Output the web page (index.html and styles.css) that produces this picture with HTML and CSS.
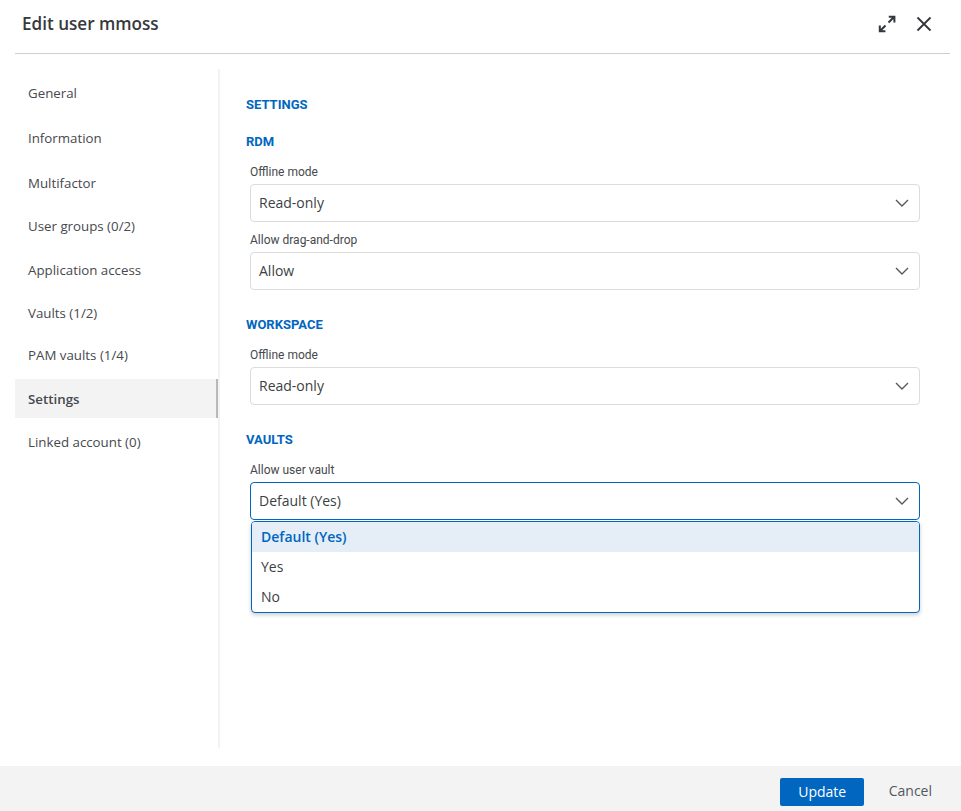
FILE: index.html
```html
<!DOCTYPE html>
<html lang="en">
<head>
    <meta charset="UTF-8">
    <meta name="viewport" content="width=device-width, initial-scale=1.0">
    <title>Edit user mmoss</title>
    <link rel="stylesheet" href="styles.css">
</head>
<body>
    <div class="dialog">
        <header class="dialog-header">
            <h1 class="dialog-title">Edit user mmoss</h1>
            <div class="dialog-actions">
                <svg class="icon-expand" width="18" height="18" viewBox="0 0 18 18" aria-hidden="true">
                    <path d="M10.5 7.5 15.5 2.5M10.8 1.8H16.4V7.4M7.5 10.5 2.5 15.5M1.8 10.6V16.2H7.4" fill="none" stroke="#33363a" stroke-width="2"/>
                </svg>
                <svg class="icon-close" width="16" height="16" viewBox="0 0 16 16" aria-hidden="true">
                    <path d="M1.5 1.5 14.5 14.5M14.5 1.5 1.5 14.5" fill="none" stroke="#33363a" stroke-width="1.8"/>
                </svg>
            </div>
        </header>

        <div class="dialog-body">
            <nav class="sidebar">
                <div class="nav-item">General</div>
                <div class="nav-item">Information</div>
                <div class="nav-item">Multifactor</div>
                <div class="nav-item">User groups (0/2)</div>
                <div class="nav-item">Application access</div>
                <div class="nav-item">Vaults (1/2)</div>
                <div class="nav-item">PAM vaults (1/4)</div>
                <div class="nav-item active">Settings</div>
                <div class="nav-item">Linked account (0)</div>
            </nav>

            <main class="content">
                <h2 class="section-title first">SETTINGS</h2>

                <h2 class="section-title rdm">RDM</h2>
                <label class="field-label">Offline mode</label>
                <div class="select">
                    <span>Read-only</span>
                    <svg class="chevron" width="14" height="8" viewBox="0 0 14 8" aria-hidden="true"><path d="M1 1 7 7 13 1" fill="none" stroke="#55585c" stroke-width="1.4"/></svg>
                </div>
                <label class="field-label second">Allow drag-and-drop</label>
                <div class="select">
                    <span>Allow</span>
                    <svg class="chevron" width="14" height="8" viewBox="0 0 14 8" aria-hidden="true"><path d="M1 1 7 7 13 1" fill="none" stroke="#55585c" stroke-width="1.4"/></svg>
                </div>

                <h2 class="section-title">WORKSPACE</h2>
                <label class="field-label">Offline mode</label>
                <div class="select">
                    <span>Read-only</span>
                    <svg class="chevron" width="14" height="8" viewBox="0 0 14 8" aria-hidden="true"><path d="M1 1 7 7 13 1" fill="none" stroke="#55585c" stroke-width="1.4"/></svg>
                </div>

                <h2 class="section-title">VAULTS</h2>
                <label class="field-label">Allow user vault</label>
                <div class="select-wrap">
                    <div class="select focused">
                        <span>Default (Yes)</span>
                        <svg class="chevron" width="14" height="8" viewBox="0 0 14 8" aria-hidden="true"><path d="M1 1 7 7 13 1" fill="none" stroke="#55585c" stroke-width="1.4"/></svg>
                    </div>
                    <ul class="dropdown">
                        <li class="selected">Default (Yes)</li>
                        <li>Yes</li>
                        <li>No</li>
                    </ul>
                </div>
            </main>
        </div>

        <footer class="dialog-footer">
            <button class="btn-update">Update</button>
            <button class="btn-cancel">Cancel</button>
        </footer>
    </div>
</body>
</html>
```

FILE: styles.css
```css
* {
    box-sizing: border-box;
}

html, body {
    height: 100%;
}

body {
    margin: 0;
    background: #fff;
    color: #3c3f43;
    font-family: 'Open Sans', sans-serif;
    overflow: hidden;
}

.dialog {
    display: flex;
    flex-direction: column;
    height: 811px;
}

.dialog-header {
    display: flex;
    justify-content: space-between;
    align-items: center;
    height: 54px;
    margin: 0 11px 0 15px;
    padding: 0 18px 6px 7px;
    border-bottom: 1px solid #cfcfcf;
}

.dialog-title {
    margin: 0;
    font-size: 17.1px;
    font-weight: 600;
    color: #36393d;
}

.dialog-actions {
    display: flex;
    align-items: center;
    gap: 20px;
}

.dialog-body {
    display: flex;
    flex: 1;
    padding: 15px 41px 18px 15px;
}

.sidebar {
    width: 205px;
    padding-top: 4px;
    border-right: 2px solid #f3f3f3;
}

.nav-item {
    display: flex;
    align-items: center;
    height: 39px;
    padding-left: 13px;
    margin-bottom: 6px;
    font-size: 13.3px;
    color: #46494d;
}

.nav-item:nth-child(3) { margin-bottom: 4px; }
.nav-item:nth-child(4) { margin-bottom: 5px; }
.nav-item:nth-child(5) { margin-bottom: 4px; }
.nav-item:nth-child(6) { margin-bottom: 3px; }
.nav-item:nth-child(7) { margin-bottom: 5px; }
.nav-item:nth-child(8) { margin-bottom: 4px; }

.nav-item.active {
    width: 203px;
    background: #f3f3f3;
    border-right: 2px solid #b8b8b8;
    font-weight: 600;
}

.content {
    flex: 1;
    padding: 0 0 0 26px;
}

.section-title {
    margin: 28px 0 0;
    height: 15px;
    line-height: 13px;
    font-family: Roboto, sans-serif;
    font-size: 13px;
    font-weight: 700;
    color: #0066c0;
}

.section-title.first {
    margin-top: 29px;
}

.section-title.rdm {
    margin-top: 22px;
}

.field-label {
    display: block;
    height: 15px;
    line-height: 15px;
    margin: 15px 0 4px 4px;
    font-family: Roboto, sans-serif;
    font-size: 12px;
    color: #46494d;
}

.field-label.second {
    margin-top: 11px;
}

.select {
    display: flex;
    justify-content: space-between;
    align-items: center;
    width: 670px;
    height: 38px;
    margin-left: 4px;
    padding: 0 10px 0 8px;
    border: 1px solid #dcdcdc;
    border-radius: 4px;
    font-size: 14px;
    color: #3c3f43;
}

.select span {
    padding-bottom: 2px;
}

.select.focused {
    border-color: #0066c0;
}

.select-wrap {
    position: relative;
}

.dropdown {
    position: absolute;
    top: 39px;
    left: 5px;
    width: 669px;
    margin: 0;
    padding: 0;
    list-style: none;
    background: #fff;
    border: 1px solid #0066c0;
    border-radius: 4px;
    box-shadow: 0 2px 4px rgba(0, 0, 0, 0.2);
    overflow: hidden;
}

.dropdown li {
    display: flex;
    align-items: center;
    height: 30px;
    padding: 0 0 2px 9px;
    font-size: 14px;
}

.dropdown li.selected {
    background: #e5eef7;
    color: #0066c0;
    font-weight: 600;
}

.dialog-footer {
    display: flex;
    justify-content: flex-end;
    align-items: flex-start;
    gap: 25px;
    height: 45px;
    padding: 12px 29px 0 0;
    background: #f3f3f3;
}

.btn-update {
    width: 84px;
    height: 28px;
    padding: 0 0 2px 1px;
    border: 0;
    border-radius: 2px;
    background: #0066c0;
    color: #fff;
    font-family: 'Open Sans', sans-serif;
    font-size: 14px;
    font-weight: 500;
}

.btn-cancel {
    height: 24px;
    padding: 0;
    border: 0;
    background: none;
    color: #55585c;
    font-family: 'Open Sans', sans-serif;
    font-size: 14px;
}
```
